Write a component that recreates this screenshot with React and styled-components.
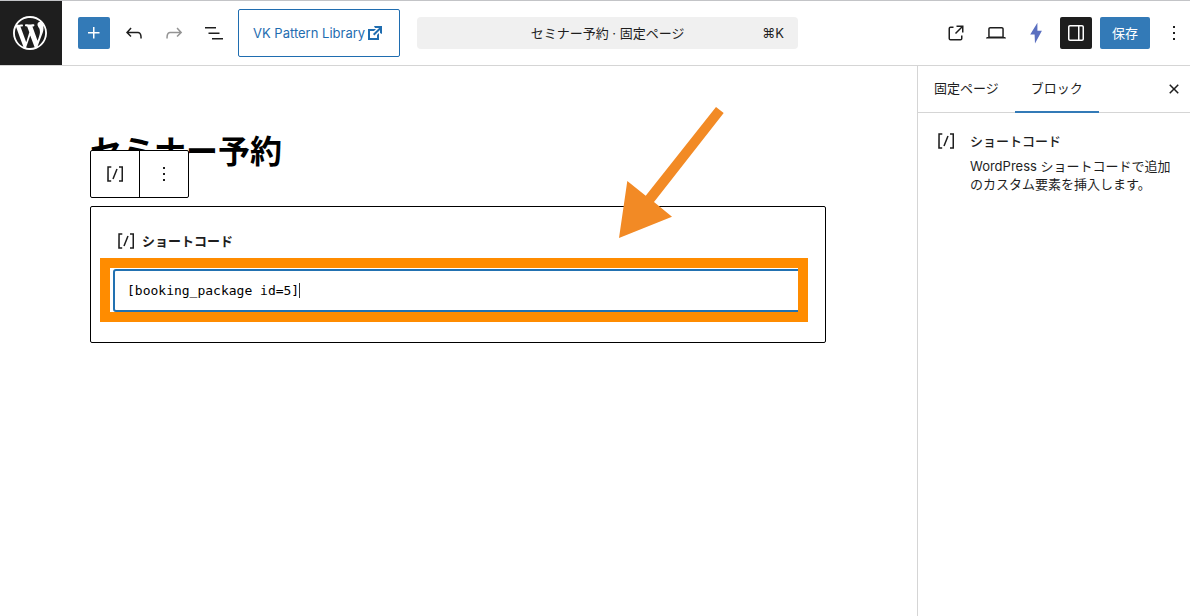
import React from "react";
import styled, { createGlobalStyle, css } from "styled-components";

const GlobalStyle = createGlobalStyle`
  *, *::before, *::after { box-sizing: border-box; }
  body {
    margin: 0;
    background: #fff;
    color: #1e1e1e;
    font-family: Inter, "Noto Sans CJK JP", sans-serif;
    font-size: 13px;
    line-height: 18px;
  }
  button, input { font: inherit; color: inherit; }
  h1, h2, p { margin: 0; }
`;

const icons = {
  plus: "M11 12.5V17.5H12.5V12.5H17.5V11H12.5V6H11V11H6V12.5H11Z",
  undo: "M18.3 11.7c-.6-.6-1.4-.9-2.3-.9H6.7l2.9-3.3-1.1-1-4.5 5L8.5 16l1-1-2.7-2.7H16c.5 0 .9.2 1.3.5 1 1 1 3.4 1 4.5v.3h1.5v-.2c0-1.5 0-4.3-1.5-5.7z",
  redo: "M15.6 6.5l-1.1 1 2.9 3.3H8c-.9 0-1.7.3-2.3.9-1.4 1.5-1.4 4.2-1.4 5.6v.2h1.5v-.3c0-1.1 0-3.5 1-4.5.3-.3.7-.5 1.3-.5h9.2L14.5 15l1.1 1.1 4.6-4.6-4.6-5z",
  list: "M3 6h11v1.5H3V6Zm3.5 5.5h11V13h-11v-1.5ZM21 17H10v1.5h11V17Z",
  external: "M19.5 4.5h-7V6h4.44l-5.97 5.97 1.06 1.06L18 7.06v4.44h1.5v-7Zm-13 1a2 2 0 0 0-2 2v10a2 2 0 0 0 2 2h10a2 2 0 0 0 2-2v-3H17v3a.5.5 0 0 1-.5.5h-10a.5.5 0 0 1-.5-.5v-10a.5.5 0 0 1 .5-.5h3V5.5h-3Z",
  desktop: "M20.5 16h-.7V8c0-1.1-.9-2-2-2H6.2c-1.1 0-2 .9-2 2v8h-.7c-.8 0-1.5.7-1.5 1.5h20c0-.8-.7-1.5-1.5-1.5zM5.7 8c0-.3.2-.5.5-.5h11.6c.3 0 .5.2.5.5v7.6H5.7V8z",
  bolt: "M13.4 1.7L6.2 13.4h4.4L11 22.4 17.9 9.8h-4.5z",
  drawer: "M18 4H6c-1.1 0-2 .9-2 2v12c0 1.1.9 2 2 2h12c1.1 0 2-.9 2-2V6c0-1.1-.9-2-2-2zm-4 14.5H6c-.3 0-.5-.2-.5-.5V6c0-.3.2-.5.5-.5h8v13zm4.5-.5c0 .3-.2.5-.5.5h-2.5v-13H18c.3 0 .5.2.5.5v12z",
  more: "M13 19h-2v-2h2v2zm0-6h-2v-2h2v2zm0-6h-2V5h2v2z",
  shortcode: "M16 4.2v1.5h2.5v12.5H16v1.5h4V4.2h-4zM4.2 19.8h4v-1.5H5.8V5.8h2.5V4.2h-4l-.1 15.6zm5.1-3.1l1.4.6 4-10-1.4-.6-4 10z",
  close: "M12 13.06l3.712 3.713 1.061-1.06L13.061 12l3.712-3.712-1.06-1.06L12 10.938 8.288 7.227l-1.061 1.06L10.939 12l-3.712 3.712 1.06 1.061L12 13.061z",
};

const Svg = styled.svg`
  display: block;
  flex: none;
  fill: currentColor;
`;

const Icon = ({ name }) => (
  <Svg width="24" height="24" viewBox="0 0 24 24" aria-hidden="true">
    <path d={icons[name]} />
  </Svg>
);

const Page = styled.div`
  display: flex;
  flex-direction: column;
  min-height: 100vh;
`;

const Header = styled.header`
  display: flex;
  align-items: center;
  border-top: 1px solid #c3c4c7;
  border-bottom: 1px solid #d5d5d5;
`;

const Home = styled.a`
  display: flex;
  align-items: center;
  flex: none;
  width: 62px;
  height: 64px;
  padding-left: 13px;
  background: #1e1e1e;
  color: #fff;
`;

const Tools = styled.div`
  display: flex;
  align-items: center;
  flex: none;
  gap: 8px;
  padding-left: ${(p) => (p.$start ? "16px" : "0")};
  margin-left: ${(p) => (p.$start ? "0" : "auto")};
`;

const tones = {
  plain: css`background: none; color: #1e1e1e;`,
  primary: css`background: #337ab7; color: #fff;`,
  pressed: css`background: #1e1e1e; color: #fff;`,
  muted: css`background: none; color: #949494;`,
  accent: css`background: none; color: #5a6fc0;`,
};

const ToolButton = styled.button`
  display: flex;
  align-items: center;
  justify-content: center;
  min-width: 32px;
  height: 32px;
  padding: 0 ${(p) => (p.$text ? "12px" : "0")};
  border: 0;
  border-radius: 2px;
  ${(p) => tones[p.$tone || "plain"]}
`;

const LibraryButton = styled.button`
  display: flex;
  align-items: center;
  height: 48px;
  padding: 0 14px;
  border: 1px solid #1f6db0;
  border-radius: 2px;
  background: #fff;
  color: #1f6db0;
`;

const CommandBar = styled.button`
  display: grid;
  grid-template-columns: 1fr auto 1fr;
  align-items: center;
  flex: 0 1 381px;
  height: 32px;
  margin-left: 17px;
  padding: 0 14px;
  border: 0;
  border-radius: 4px;
  background: #f0f0f0;
`;

const CommandTitle = styled.span`
  grid-column: 2;
`;

const Shortcut = styled.span`
  justify-self: end;
`;

const Body = styled.div`
  display: flex;
  flex: 1;
`;

const Canvas = styled.main`
  flex: 1;
  min-width: 0;
  padding: 64px 91px 0 90px;
`;

const Title = styled.h1`
  font-size: 32px;
  font-weight: 700;
  line-height: 44px;
  color: #000;
`;

const Block = styled.section`
  position: relative;
  margin-top: 32px;
  padding: 22px 22px 30px;
  border: 1px solid #000;
  border-radius: 2px;
`;

const BlockToolbar = styled.div`
  position: absolute;
  left: -1px;
  top: -57px;
  display: flex;
  border: 1px solid #000;
  border-radius: 2px;
  background: #fff;
`;

const BlockTool = styled.button`
  display: flex;
  align-items: center;
  justify-content: center;
  width: 48px;
  height: 46px;
  padding: 0;
  border: 0;
  background: none;

  & + & {
    width: 49px;
    border-left: 1px solid #000;
  }
`;

const BlockLabel = styled.label`
  display: flex;
  align-items: center;
  gap: 4px;
  height: 24px;
  margin-bottom: 16px;
  padding-left: 1px;
  font-weight: 600;
`;

const Field = styled.div`
  position: relative;
  font-family: "DejaVu Sans Mono", monospace;
`;

const CodeInput = styled.input`
  display: block;
  width: 100%;
  height: 43px;
  padding: 0 12px;
  border: 2px solid #2271b1;
  border-radius: 3px;
  outline: 0;
  background: #fff;
  color: #000;
`;

const Caret = styled.span`
  position: absolute;
  left: calc(14px + 22ch);
  top: 14px;
  width: 1px;
  height: 15px;
  background: #333;
`;

const Highlight = styled.div`
  position: absolute;
  inset: -11px -5px -10px -13px;
  border: 10px solid #ff8c00;
  pointer-events: none;
`;

const Arrow = styled.svg`
  position: absolute;
  left: 528px;
  top: -100px;
  pointer-events: none;
`;

const Sidebar = styled.aside`
  flex: none;
  width: 273px;
  border-left: 1px solid #d5d5d5;
`;

const Tabs = styled.div`
  display: flex;
  align-items: center;
  height: 47px;
  border-bottom: 1px solid #d5d5d5;
`;

const Tab = styled.button`
  height: 47px;
  padding: 0 16px 2px;
  border: 0;
  background: none;
  box-shadow: ${(p) => (p.$active ? "inset 0 -2px 0 #337ab7" : "none")};
`;

const CloseSlot = styled.div`
  margin-left: auto;
`;

const Card = styled.div`
  display: flex;
  gap: 12px;
  padding: 16px;
`;

const CardTitle = styled.h2`
  margin-bottom: 4px;
  font-size: 13px;
  font-weight: 500;
  line-height: 24px;
`;

export default function App() {
  return (
    <Page>
      <GlobalStyle />
      <Header>
        <Home href="#" aria-label="WordPress">
          <Svg width="34" height="34" viewBox="0 0 20 20" aria-hidden="true">
            <path d="M20 10c0-5.51-4.49-10-10-10C4.48 0 0 4.49 0 10c0 5.52 4.48 10 10 10 5.51 0 10-4.48 10-10zM7.78 15.37L4.37 6.22c.55-.02 1.17-.08 1.17-.08.5-.06.44-1.13-.06-1.11 0 0-1.45.11-2.37.11-.18 0-.37 0-.58-.01C4.12 2.69 6.87 1.11 10 1.11c2.33 0 4.45.87 6.05 2.34-.68-.11-1.65.39-1.65 1.58 0 .74.45 1.36.9 2.1.35.61.55 1.36.55 2.46 0 1.49-1.4 5-1.4 5l-3.03-8.37c.54-.02.82-.17.82-.17.5-.05.44-1.25-.06-1.22 0 0-1.44.12-2.38.12-.87 0-2.33-.12-2.33-.12-.5-.03-.56 1.2-.06 1.22l.92.08 1.26 3.41zM17.41 10c.24-.64.74-1.87.43-4.25.7 1.29 1.05 2.71 1.05 4.25 0 3.29-1.73 6.24-4.4 7.78.97-2.59 1.94-5.2 2.92-7.78zM6.1 18.09C3.12 16.65 1.11 13.53 1.11 10c0-1.3.23-2.48.72-3.59C3.25 10.3 4.67 14.2 6.1 18.09zm4.03-6.63l2.58 6.98c-.86.29-1.76.45-2.71.45-.79 0-1.57-.11-2.29-.33.81-2.38 1.62-4.74 2.42-7.1z" />
          </Svg>
        </Home>
        <Tools $start>
          <ToolButton $tone="primary" aria-label="ブロックを追加"><Icon name="plus" /></ToolButton>
          <ToolButton aria-label="元に戻す"><Icon name="undo" /></ToolButton>
          <ToolButton $tone="muted" aria-label="やり直し"><Icon name="redo" /></ToolButton>
          <ToolButton aria-label="リスト表示"><Icon name="list" /></ToolButton>
          <LibraryButton>
            VK Pattern Library
            <Svg width="20" height="20" viewBox="0 0 20 20" aria-hidden="true">
              <path d="M9 3h8v8l-2-1V6.92l-5.6 5.59-1.41-1.41L14.08 5H10zm3 12v-3l2-2v7H3V6h8L9 8H5v7h7z" />
            </Svg>
          </LibraryButton>
        </Tools>
        <CommandBar>
          <CommandTitle>セミナー予約 · 固定ページ</CommandTitle>
          <Shortcut>⌘K</Shortcut>
        </CommandBar>
        <Tools>
          <ToolButton aria-label="ページを表示"><Icon name="external" /></ToolButton>
          <ToolButton aria-label="プレビュー"><Icon name="desktop" /></ToolButton>
          <ToolButton $tone="accent" aria-label="パフォーマンス"><Icon name="bolt" /></ToolButton>
          <ToolButton $tone="pressed" aria-label="設定"><Icon name="drawer" /></ToolButton>
          <ToolButton $tone="primary" $text>保存</ToolButton>
          <ToolButton aria-label="オプション"><Icon name="more" /></ToolButton>
        </Tools>
      </Header>
      <Body>
        <Canvas>
          <Title>セミナー予約</Title>
          <Block>
            <BlockLabel htmlFor="shortcode">
              <Icon name="shortcode" />
              ショートコード
            </BlockLabel>
            <Field>
              <CodeInput id="shortcode" type="text" defaultValue="[booking_package id=5]" />
              <Caret />
              <Highlight />
            </Field>
            <BlockToolbar>
              <BlockTool aria-label="ショートコード"><Icon name="shortcode" /></BlockTool>
              <BlockTool aria-label="オプション"><Icon name="more" /></BlockTool>
            </BlockToolbar>
            <Arrow width="105" height="131" viewBox="0 0 105 131" aria-hidden="true">
              <path fill="#f28a25" d="M97 0L104.700 6L35 95L53 109.700L0 131L8.300 74L26.700 88.700Z" />
            </Arrow>
          </Block>
        </Canvas>
        <Sidebar>
          <Tabs>
            <Tab>固定ページ</Tab>
            <Tab $active>ブロック</Tab>
            <CloseSlot>
              <ToolButton aria-label="閉じる"><Icon name="close" /></ToolButton>
            </CloseSlot>
          </Tabs>
          <Card>
            <Icon name="shortcode" />
            <div>
              <CardTitle>ショートコード</CardTitle>
              <p>WordPress ショートコードで追加のカスタム要素を挿入します。</p>
            </div>
          </Card>
        </Sidebar>
      </Body>
    </Page>
  );
}
